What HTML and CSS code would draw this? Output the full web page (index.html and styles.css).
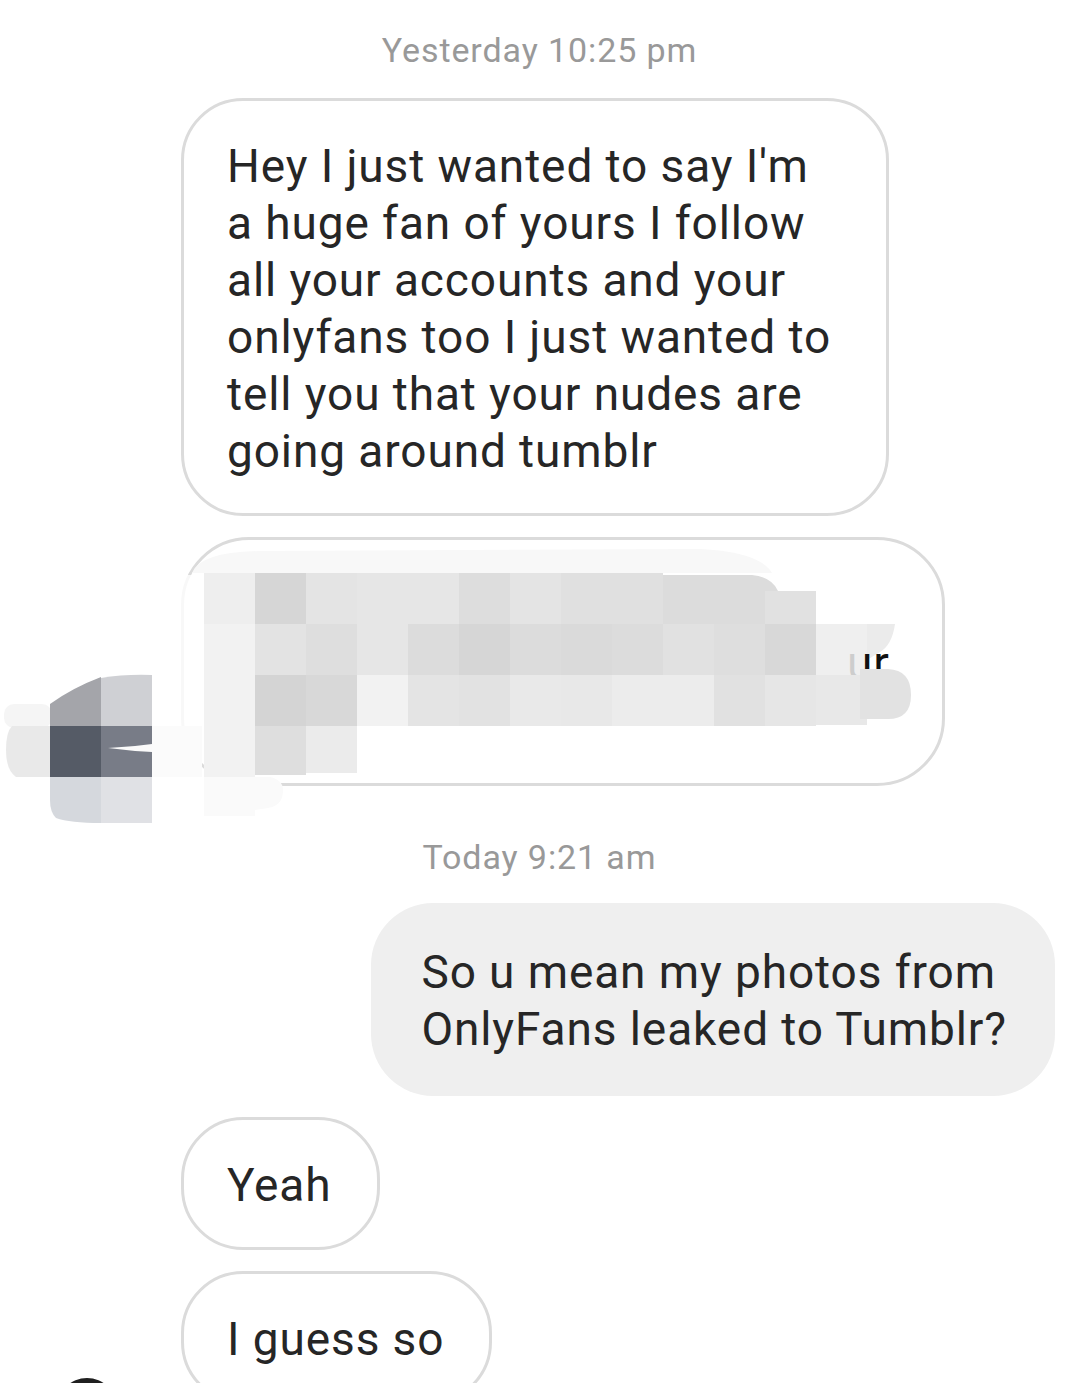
FILE: index.html
```html
<!DOCTYPE html>
<html lang="en">
<head>
  <meta charset="UTF-8" />
  <title>Direct messages</title>
  <link rel="stylesheet" href="styles.css">
</head>
<body>
  <div class="screen">
    <div class="thread">
      <div class="stamp first">Yesterday 10:25 pm</div>

      <div class="bubble in wide">Hey I just wanted to say I'm<br>a huge fan of yours I follow<br>all your accounts and your<br>onlyfans too I just wanted to<br>tell you that your nudes are<br>going around tumblr</div>

      <div class="bubble in redacted">
        <!-- pixelated / smudged message, drawn over the bubble -->
        <svg class="smudge" width="950" height="300" viewBox="0 540 950 300">
          <path d="M192 573 Q200 552 260 551 L700 549 Q760 552 772 573 Z" fill="#f8f8f8"/>
          <rect x="172" y="575" width="32" height="190" rx="12" fill="#fff" opacity="0.8"/>

          <!-- row 1 -->
          <rect x="204" y="573" width="51" height="51" fill="#eeeeee"/>
          <rect x="255" y="573" width="51" height="51" fill="#d6d6d6"/>
          <rect x="306" y="573" width="51" height="51" fill="#e4e4e4"/>
          <rect x="357" y="573" width="51" height="51" fill="#e6e6e6"/>
          <rect x="408" y="573" width="51" height="51" fill="#e6e6e6"/>
          <rect x="459" y="573" width="51" height="51" fill="#dddddd"/>
          <rect x="510" y="573" width="51" height="51" fill="#e4e4e4"/>
          <rect x="561" y="573" width="51" height="51" fill="#e0e0e0"/>
          <rect x="612" y="573" width="51" height="51" fill="#e0e0e0"/>
          <rect x="663" y="575" width="51" height="49" fill="#dcdcdc"/>
          <path d="M714 575 H752 Q772 577 778 591 H765 V624 H714 Z" fill="#dcdcdc"/>
          <rect x="765" y="591" width="51" height="33" fill="#e1e1e1"/>

          <!-- row 2 -->
          <rect x="204" y="624" width="51" height="51" fill="#f2f2f2"/>
          <rect x="255" y="624" width="51" height="51" fill="#e3e3e3"/>
          <rect x="306" y="624" width="51" height="51" fill="#dedede"/>
          <rect x="357" y="624" width="51" height="51" fill="#e6e6e6"/>
          <rect x="408" y="624" width="51" height="51" fill="#dcdcdc"/>
          <rect x="459" y="624" width="51" height="51" fill="#d6d6d6"/>
          <rect x="510" y="624" width="51" height="51" fill="#dcdcdc"/>
          <rect x="561" y="624" width="51" height="51" fill="#dadada"/>
          <rect x="612" y="624" width="51" height="51" fill="#dcdcdc"/>
          <rect x="663" y="624" width="51" height="51" fill="#e1e1e1"/>
          <rect x="714" y="624" width="51" height="51" fill="#dedede"/>
          <rect x="765" y="624" width="51" height="51" fill="#d8d8d8"/>
          <rect x="816" y="624" width="51" height="51" fill="#efefef"/>
          <path d="M867 624 H895 Q892 645 880 652 L867 660 Z" fill="#ebebeb"/>

          <text x="847" y="679" font-family="Roboto, sans-serif" font-size="46" fill="#111">ur</text>
          <rect x="836" y="648" width="28" height="27" fill="#efefef" opacity="0.85"/>

          <!-- row 3 -->
          <rect x="204" y="675" width="51" height="51" fill="#f2f2f2"/>
          <rect x="255" y="675" width="51" height="51" fill="#d4d4d4"/>
          <rect x="306" y="675" width="51" height="51" fill="#d8d8d8"/>
          <rect x="357" y="675" width="51" height="51" fill="#f2f2f2"/>
          <rect x="408" y="675" width="51" height="51" fill="#e4e4e4"/>
          <rect x="459" y="675" width="51" height="51" fill="#e2e2e2"/>
          <rect x="510" y="675" width="51" height="51" fill="#e9e9e9"/>
          <rect x="561" y="675" width="51" height="51" fill="#e8e8e8"/>
          <rect x="612" y="675" width="51" height="51" fill="#ececec"/>
          <rect x="663" y="675" width="51" height="51" fill="#ececec"/>
          <rect x="714" y="675" width="51" height="51" fill="#e1e1e1"/>
          <rect x="765" y="675" width="51" height="51" fill="#e6e6e6"/>
          <rect x="816" y="675" width="51" height="50" fill="#e8e8e8"/>
          <path d="M860 669 H888 Q911 670 911 695 Q911 719 888 719 H860 Z" fill="#e2e2e2"/>

          <!-- row 4 -->
          <rect x="204" y="726" width="51" height="51" fill="#f2f2f2"/>
          <rect x="255" y="726" width="51" height="49" fill="#dedede"/>
          <rect x="306" y="726" width="51" height="47" fill="#ebebeb"/>
          <path d="M204 777 H270 Q284 780 283 792 Q282 806 268 808 L255 810 V816 H204 Z" fill="#fafafa"/>

          <!-- left smear -->
          <rect x="4" y="704" width="48" height="24" rx="10" fill="#f5f5f5"/>
          <path d="M50 726 V704 Q72 688 101 677 V726 Z" fill="#a4a5aa"/>
          <path d="M101 678 Q125 674 152 675 V726 H101 Z" fill="#cfd0d4"/>
          <rect x="152" y="726" width="50" height="51" fill="#fbfbfb"/>
          <path d="M12 726 H50 V777 H16 Q6 770 6 750 Q6 732 12 726 Z" fill="#e9e9e9"/>
          <rect x="50" y="726" width="51" height="51" fill="#555b66"/>
          <rect x="101" y="726" width="51" height="51" fill="#787c87"/>
          <path d="M108 748 L135 746 L152 744 V752 L135 751 Z" fill="#fafafa"/>
          <path d="M50 777 H101 V823 Q70 823 56 818 Q50 812 50 800 Z" fill="#d5d8dd"/>
          <rect x="101" y="777" width="51" height="46" fill="#e0e1e5"/>
        </svg>
      </div>

      <div class="stamp">Today 9:21 am</div>

      <div class="bubble mine">So u mean my photos from<br>OnlyFans leaked to Tumblr?</div>

      <div class="bubble in">Yeah</div>

      <div class="last-row">
        <div class="avatar"></div>
        <div class="bubble in">I guess so</div>
      </div>
    </div>
  </div>
</body>
</html>
```

FILE: styles.css
```css
body {
  margin: 0;
  background: #fff;
  font-family: Roboto, "Noto Sans", sans-serif;
  color: #262626;
}
.screen {
  height: 1383px;
  overflow: hidden;
  padding-top: 30px;
  box-sizing: border-box;
}
.thread {
  display: flex;
  flex-direction: column;
  align-items: flex-start;
}
.stamp {
  align-self: stretch;
  text-align: center;
  font-size: 34px;
  line-height: 40px;
  letter-spacing: 0.9px;
  color: #999;
  margin: 30px 0 26px;
}
.stamp.first {
  margin-top: 0;
  margin-bottom: 28px;
}
.bubble {
  font-size: 46px;
  line-height: 57px;
  letter-spacing: 0.9px;
  border-radius: 62px;
  margin-bottom: 21px;
  box-sizing: border-box;
  white-space: nowrap;
}
.bubble.in {
  margin-left: 181px;
  border: 3px solid #dbdbdb;
  padding: 37px 45px 33px 43px;
}
.bubble.wide {
  width: 708px;
}
.bubble.mine {
  align-self: flex-end;
  margin-right: 24px;
  background: #efefef;
  padding: 41px 48px 38px 50px;
}
.redacted {
  position: relative;
  width: 764px;
  height: 249px;
  border-radius: 68px;
}
.smudge {
  position: absolute;
  left: -184px;
  top: 0;
  overflow: visible;
}
.last-row {
  display: flex;
  align-items: flex-start;
}
.avatar {
  width: 60px;
  height: 60px;
  border-radius: 50%;
  background: #1f1f1f;
  margin: 107px 0 0 57px;
}
.last-row .bubble.in {
  margin-left: 64px;
}
```
